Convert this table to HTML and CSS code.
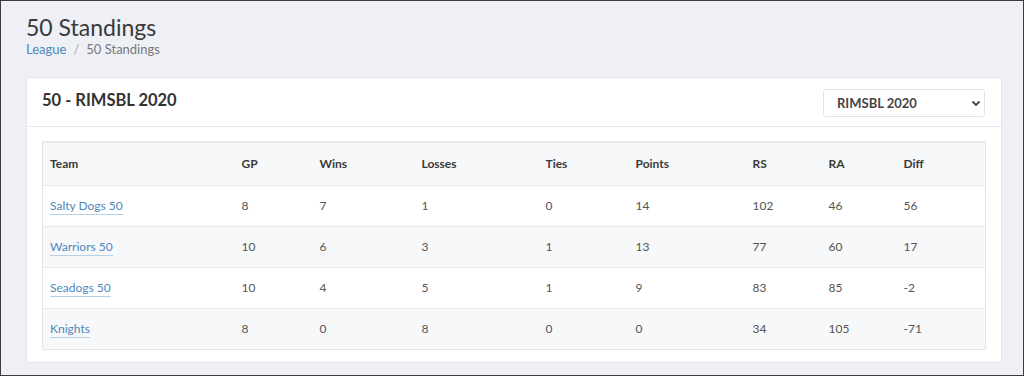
FILE: index.html
```html
<!DOCTYPE html>
<html>
<head>
<meta charset="utf-8">
<link rel="stylesheet" href="styles.css">
</head>
<body>
<div class="frame">
  <div class="page-head">
    <h1 class="title">50 Standings</h1>
    <div class="crumbs"><a class="crumb-link" href="#">League</a><span class="crumb-sep">/</span><span class="crumb-cur">50 Standings</span></div>
  </div>
  <div class="card">
    <div class="card-head">
      <h2 class="card-title">50 - RIMSBL 2020</h2>
      <div class="select">
        <span class="select-text">RIMSBL 2020</span>
        <svg class="chev" width="10" height="8" viewBox="0 0 10 8"><path d="M1.5 2.5 L5 6 L8.5 2.5" fill="none" stroke="#444" stroke-width="1.8"/></svg>
      </div>
    </div>
    <div class="card-body">
      <table class="standings">
        <colgroup>
          <col style="width:192px"><col style="width:78px"><col style="width:102px"><col style="width:124px"><col style="width:90px"><col style="width:117px"><col style="width:76px"><col style="width:75px"><col>
        </colgroup>
        <thead>
          <tr><th>Team</th><th>GP</th><th>Wins</th><th>Losses</th><th>Ties</th><th>Points</th><th>RS</th><th>RA</th><th>Diff</th></tr>
        </thead>
        <tbody>
          <tr><td><a class="team" href="#">Salty Dogs 50</a></td><td>8</td><td>7</td><td>1</td><td>0</td><td>14</td><td>102</td><td>46</td><td>56</td></tr>
          <tr><td><a class="team" href="#">Warriors 50</a></td><td>10</td><td>6</td><td>3</td><td>1</td><td>13</td><td>77</td><td>60</td><td>17</td></tr>
          <tr><td><a class="team" href="#">Seadogs 50</a></td><td>10</td><td>4</td><td>5</td><td>1</td><td>9</td><td>83</td><td>85</td><td>-2</td></tr>
          <tr><td><a class="team" href="#">Knights</a></td><td>8</td><td>0</td><td>8</td><td>0</td><td>0</td><td>34</td><td>105</td><td>-71</td></tr>
        </tbody>
      </table>
    </div>
  </div>
</div>
</body>
</html>
```
FILE: styles.css
```css
* { box-sizing: border-box; }
html, body { margin: 0; padding: 0; }
body {
  font-family: Lato, "Open Sans", sans-serif;
  color: #555;
  background: #eef0f5;
}
.frame {
  width: 1024px;
  height: 376px;
  border: 1px solid #3c3c3c;
  padding: 12px 21px 0 25px;
  overflow: hidden;
}
.page-head { margin-bottom: 21px; }
.title {
  margin: 0;
  font-weight: 400;
  font-size: 23px;
  line-height: 28px;
  color: #3a3a3a;
}
.crumbs {
  margin-top: 1px;
  font-size: 13px;
  line-height: 14px;
  color: #777;
}
.crumb-link { color: #4d87bb; text-decoration: none; }
.crumb-sep { margin: 0 7px; color: #aaa; }
.crumb-cur { color: #777; }
.card {
  background: #fff;
  border: 1px solid #e2e5ea;
  border-radius: 3px;
}
.card-head {
  display: flex;
  align-items: flex-start;
  justify-content: space-between;
  height: 49px;
  padding: 0 16px 0 15px;
  border-bottom: 1px solid #e6e8ec;
}
.card-title {
  margin: 12px 0 0 0;
  font-size: 16.5px;
  font-weight: 700;
  color: #333;
}
.select {
  width: 162px;
  height: 28px;
  margin-top: 11px;
  border: 1px solid #dfe2e7;
  border-radius: 3px;
  display: flex;
  align-items: center;
  justify-content: space-between;
  padding: 0 3px 0 13px;
  font-size: 13px;
  font-weight: 700;
  color: #444;
}
.card-body { padding: 14px 15px 12px 15px; }
.standings {
  width: 944px;
  border-collapse: collapse;
  table-layout: fixed;
  border: 1px solid #e3e6ea;
  font-size: 12px;
}
.standings th, .standings td {
  text-align: left;
  padding: 0 7px;
  border-top: 1px solid #e6e8ec;
}
.standings th {
  height: 43px;
  font-weight: 700;
  color: #3a3a3a;
  background: #f7f8fa;
  border-top: 2px solid #e6e8ec;
}
.standings td { height: 41px; color: #555; }
.standings tbody tr:nth-child(even) td { background: #f7f8fa; }
.team {
  color: #4d87bb;
  text-decoration: none;
  border-bottom: 1px solid #b9cfe3;
  padding-bottom: 1px;
}
```
